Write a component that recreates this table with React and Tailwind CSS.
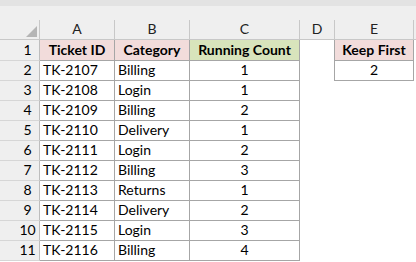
import React from "react";

const rows = [
  ["TK-2107", "Billing", "1"],
  ["TK-2108", "Login", "1"],
  ["TK-2109", "Billing", "2"],
  ["TK-2110", "Delivery", "1"],
  ["TK-2111", "Login", "2"],
  ["TK-2112", "Billing", "3"],
  ["TK-2113", "Returns", "1"],
  ["TK-2114", "Delivery", "2"],
  ["TK-2115", "Login", "3"],
  ["TK-2116", "Billing", "4"],
];

function RowHead({ n, h }) {
  return (
    <div className={`${h} w-[40px] shrink-0 bg-[#efefef] border-r border-b border-r-[#bdbdbd] border-b-[#d6d6d6] pl-[16px] flex items-end justify-center pb-[2px] leading-[16px]`}>
      {n}
    </div>
  );
}

export default function App() {
  const font = { fontFamily: "Lato, 'Liberation Sans', sans-serif" };
  return (
    <div className="w-[416px] h-[262px] bg-white overflow-hidden text-[14px] text-black" style={font}>
      <div className="h-[6px] bg-[#e3e3e3]" />
      <div className="h-[14px] bg-[#efefef]" />
      {/* column headers */}
      <div className="flex h-[20px] bg-[#efefef] text-[#222]">
        <div className="w-[40px] shrink-0 border-r border-b border-[#c8c8c8] relative">
          <svg className="absolute left-[26px] top-[6px]" width="12" height="12" viewBox="0 0 12 12">
            <polygon points="11,0 11,11 0,11" fill="#b5b5b5" />
          </svg>
        </div>
        {[
          ["A", "w-[75px]"],
          ["B", "w-[75px]"],
          ["C", "w-[110px]"],
          ["D", "w-[35px]"],
          ["E", "w-[79px]"],
        ].map(([l, w]) => (
          <div key={l} className={`${w} shrink-0 border-r border-b border-[#c8c8c8] flex items-end justify-center pb-[2px] leading-[16px]`}>
            {l}
          </div>
        ))}
        <div className="flex-1 border-b border-[#c8c8c8]" />
      </div>
      {/* row 1 */}
      <div className="flex h-[21px]">
        <RowHead n="1" h="h-[21px]" />
        <div className="w-[75px] shrink-0 bg-[#f2dcdb] border-r border-b border-[#a6a6a6] flex items-end justify-center pb-[2px] leading-[16px] font-bold">Ticket ID</div>
        <div className="w-[75px] shrink-0 bg-[#f2dcdb] border-r border-b border-[#a6a6a6] flex items-end justify-center pb-[2px] leading-[16px] font-bold">Category</div>
        <div className="w-[110px] shrink-0 bg-[#d8e4bc] border-r border-b border-[#a6a6a6] flex items-end justify-center pb-[2px] leading-[16px] font-bold">Running Count</div>
        <div className="w-[35px] shrink-0 border-r border-[#a6a6a6]" />
        <div className="w-[79px] shrink-0 bg-[#f2dcdb] border-r border-b border-[#a6a6a6] flex items-end justify-center pb-[2px] leading-[16px] font-bold">Keep First</div>
      </div>
      {rows.map((r, i) => (
        <div key={i} className="flex h-[20px]">
          <RowHead n={String(i + 2)} h="h-[20px]" />
          <div className="w-[75px] shrink-0 border-r border-b border-[#a6a6a6] flex items-end pl-[3px] pb-[2px] leading-[16px]">{r[0]}</div>
          <div className="w-[75px] shrink-0 border-r border-b border-[#a6a6a6] flex items-end pl-[3px] pb-[2px] leading-[16px]">{r[1]}</div>
          <div className="w-[110px] shrink-0 border-r border-b border-[#a6a6a6] flex items-end justify-center pb-[2px] leading-[16px]">{r[2]}</div>
          <div className={`w-[35px] shrink-0 ${i === 0 ? "border-r border-[#a6a6a6]" : ""}`} />
          {i === 0 ? (
            <div className="w-[79px] shrink-0 border-r border-b border-[#a6a6a6] flex items-end justify-center pb-[2px] leading-[16px]">2</div>
          ) : (
            <div className="w-[79px] shrink-0" />
          )}
        </div>
      ))}
    </div>
  );
}
